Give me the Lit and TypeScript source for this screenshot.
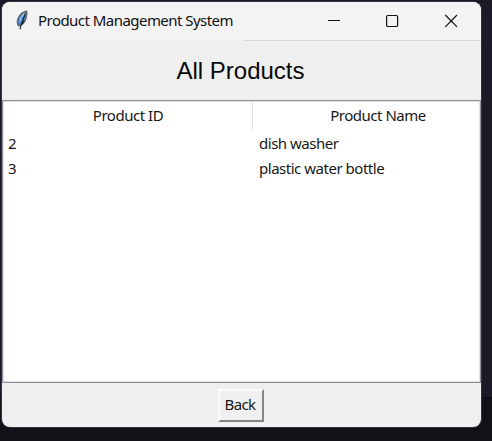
import { LitElement, html, css } from "lit";
import { customElement, state } from "lit/decorators.js";

interface Product {
  id: number;
  name: string;
}

@customElement("title-bar")
class TitleBar extends LitElement {
  static styles = css`
    :host {
      display: flex;
      box-sizing: border-box;
      height: 39px;
      background: linear-gradient(to right, transparent 242px, #d6d6d6 242px) bottom / 100% 1px no-repeat, #f3f3f3;
    }
    .icon {
      display: block;
      width: 16px;
      height: 22px;
      margin: 7px 0 0 12px;
    }
    .title {
      flex: 1;
      margin-left: 8px;
      font: 15px/37px "Noto Sans", sans-serif;
      letter-spacing: -0.54px;
      color: #101010;
      white-space: nowrap;
    }
    .controls {
      display: flex;
      padding-right: 5px;
    }
    .control {
      display: block;
      width: 58.5px;
      height: 37px;
    }
    .controls svg {
      fill: none;
      stroke: #111;
      stroke-width: 1.2;
    }
  `;

  render() {
    return html`
      <svg class="icon" viewBox="0 0 16 22">
        <path d="M12.6 2.2C9.6 2.4 5.8 5.4 4.1 9.6C3 12.6 3 15 4.8 16.9C8.4 15.8 11 13.2 11.9 9.4C12.4 7 13.2 4.4 12.6 2.2Z" fill="#4a86cc" stroke="#5b636d" stroke-width="1.4" />
        <path d="M10.4 4.4C8 6.6 6.4 9.4 5.9 12.5" fill="none" stroke="#8fbdf0" stroke-width="1.6" />
        <path d="M11.4 4.6C10 9 7.8 12 6 20.4M10.2 11.6L8 15" fill="none" stroke="#1c2733" stroke-width="1.2" />
      </svg>
      <div class="title">Product Management System</div>
      <div class="controls">
        <svg class="control" viewBox="0 0 58.5 37"><path d="M27 18.5h12" /></svg>
        <svg class="control" viewBox="0 0 58.5 37"><rect x="27.6" y="13.5" width="11" height="11" rx="1.3" /></svg>
        <svg class="control" viewBox="0 0 58.5 37"><path d="M27.3 13L39 24.8M39 13L27.3 24.8" /></svg>
      </div>
    `;
  }
}

@customElement("product-table")
class ProductTable extends LitElement {
  static properties = { products: { attribute: false } };
  declare products: Product[];

  static styles = css`
    :host {
      display: block;
      box-sizing: border-box;
      border: 1px solid #8b909b;
      box-shadow: inset 0 0 0 1px #dfe1e6;
      background: #fff;
      overflow: hidden;
      font: 15px/25px "Noto Sans", sans-serif;
      letter-spacing: -0.48px;
      color: #171717;
    }
    .row {
      display: grid;
      grid-template-columns: 250px 250px;
      height: 25px;
      white-space: nowrap;
    }
    .head {
      height: 30px;
      line-height: 28px;
      text-align: center;
    }
    .head .cell {
      padding: 0;
    }
    .head .cell:first-child {
      padding-left: 1px;
      border-right: 1px solid #e3e3e3;
    }
    .cell {
      padding-left: 5px;
    }
    .cell + .cell {
      padding-left: 6px;
    }
    .head .cell + .cell {
      padding-left: 0;
    }
  `;

  render() {
    return html`
      <div class="row head">
        <div class="cell">Product ID</div>
        <div class="cell">Product Name</div>
      </div>
      ${this.products.map(
        (p) => html`<div class="row">
          <div class="cell">${p.id}</div>
          <div class="cell">${p.name}</div>
        </div>`
      )}
    `;
  }
}

@customElement("app-root")
class AppRoot extends LitElement {
  @state() products: Product[] = [
    { id: 2, name: "dish washer" },
    { id: 3, name: "plastic water bottle" },
  ];

  static styles = css`
    :host {
      display: block;
      box-sizing: border-box;
      width: 492px;
      height: 441px;
      padding: 2px;
      overflow: hidden;
      background: linear-gradient(#1b1a26 0 397px, #0d0e12 397px 398px, #111217 398px);
    }
    .window {
      display: flex;
      flex-direction: column;
      width: 479px;
      height: 425px;
      border-radius: 8px;
      overflow: hidden;
      background: #efefef;
      box-shadow: 0 0 0 1px #34343e;
    }
    .heading {
      height: 59px;
      margin: 0;
      padding-right: 2px;
      text-align: center;
      font: 24px/60px "Liberation Sans", Arial, sans-serif;
      color: #080808;
    }
    product-table {
      height: 283px;
    }
    .footer {
      display: flex;
      justify-content: center;
      padding: 6px 1px 0 0;
    }
    .back {
      box-sizing: border-box;
      width: 46px;
      height: 33px;
      padding: 0 2px 3px 0;
      border: 2px solid;
      border-color: #fbfbfb #858585 #858585 #fbfbfb;
      border-radius: 0;
      background: #f0f0f0;
      font: 15px/26px "Noto Sans", sans-serif;
      letter-spacing: -0.6px;
      color: #171717;
    }
  `;

  render() {
    return html`
      <div class="window">
        <title-bar></title-bar>
        <h1 class="heading">All Products</h1>
        <product-table .products=${this.products}></product-table>
        <div class="footer"><button class="back">Back</button></div>
      </div>
    `;
  }
}
